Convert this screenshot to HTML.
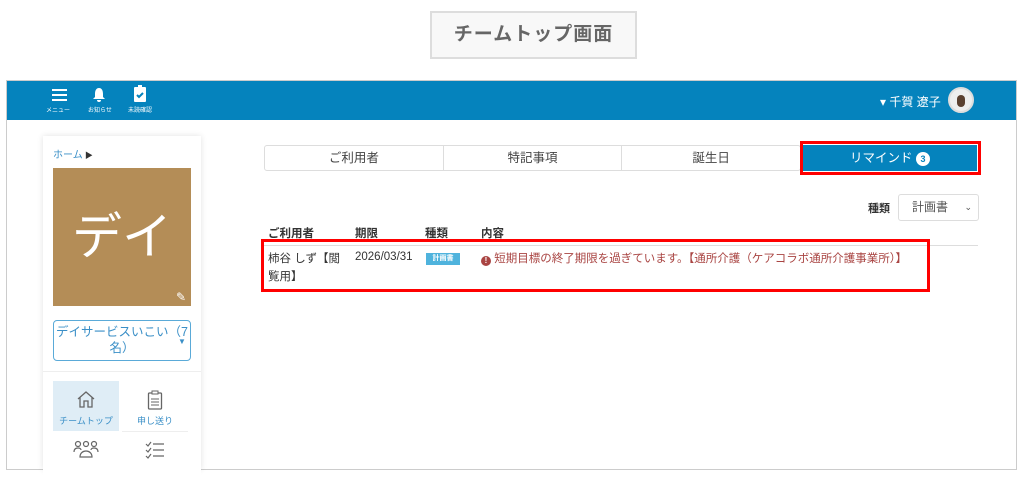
<!DOCTYPE html>
<html><head><meta charset="utf-8"><style>
*{box-sizing:border-box;margin:0;padding:0}
body{width:1024px;height:480px;background:#fff;font-family:"Liberation Sans","Noto Sans CJK JP",sans-serif;position:relative;overflow:hidden;color:#333}
.a{position:absolute}
</style></head><body>
<div class="a" style="left:430px;top:11px;width:207px;height:48px;border:2px solid #ddd;background:#f8f8f8;font-size:19px;font-weight:bold;color:#666;text-align:center;line-height:44px;letter-spacing:1px">チームトップ画面</div>
<div class="a" style="left:6px;top:80px;width:1011px;height:390px;border:1px solid #ccc;background:#fff"></div>
<div class="a" style="left:7px;top:81px;width:1009px;height:39px;background:#0583bd"></div>
<div class="a" style="left:52px;top:89px;width:15px;height:2px;background:#fff;box-shadow:0 5px 0 #fff,0 10px 0 #fff"></div>
<div class="a" style="left:46px;top:105px;font-size:6px;color:#fff">メニュー</div>
<svg class="a" style="left:92px;top:87px" width="14" height="16" viewBox="0 0 14 16"><path d="M7 1C4 1 3 4 3 7v3L1 12h12l-2-2V7c0-3-1-6-4-6z M5 13a2 2 0 0 0 4 0z" fill="#fff"/></svg>
<div class="a" style="left:88px;top:105px;font-size:6px;color:#fff">お知らせ</div>
<svg class="a" style="left:133px;top:85px" width="14" height="18" viewBox="0 0 14 18"><rect x="1" y="2" width="12" height="15" rx="1" fill="#fff"/><rect x="5" y="0" width="4" height="4" fill="#fff"/><path d="M4 10l2 2 4-4" stroke="#0583bd" stroke-width="2" fill="none"/></svg>
<div class="a" style="left:128px;top:105px;font-size:6px;color:#fff">未読確認</div>
<div class="a" style="left:880px;top:93px;font-size:12px;color:#fff">▾ 千賀 遼子</div>
<div class="a" style="left:948px;top:87px;width:26px;height:26px;border-radius:50%;background:#eee;border:2px solid #ddd"><div style="margin:6px auto;width:8px;height:12px;border-radius:4px;background:#5a4030"></div></div>
<div class="a" style="left:43px;top:136px;width:158px;height:334px;background:#fff;box-shadow:0 0 6px rgba(0,0,0,.12)"></div>
<div class="a" style="left:53px;top:146px;font-size:10px;color:#3a8fc7">ホーム<span style="color:#333;font-size:8px"> ▶</span></div>
<div class="a" style="left:53px;top:168px;width:138px;height:138px;background:#b48d57;color:#fff;font-size:50px;line-height:138px;text-align:center">デイ</div>
<div class="a" style="left:176px;top:290px;font-size:12px;color:#fff">✎</div>
<div class="a" style="left:53px;top:320px;width:138px;height:41px;border:1px solid #5aaad8;border-radius:4px"></div>
<div class="a" style="left:53px;top:324px;width:138px;color:#3a8fc7;font-size:12.5px;text-align:center;line-height:16px;white-space:nowrap">デイサービスいこい（7<br>名）</div>
<div class="a" style="left:178px;top:337px;font-size:8px;color:#3a8fc7">▼</div>
<div class="a" style="left:43px;top:371px;width:158px;height:1px;background:#eee"></div>
<div class="a" style="left:53px;top:381px;width:66px;height:50px;background:#dfedf6"></div>
<svg class="a" style="left:76px;top:390px" width="20" height="18" viewBox="0 0 20 18"><path d="M2 9L10 2l8 7M4 7v10h4v-6h4v6h4V7" stroke="#666" stroke-width="1.3" fill="none"/></svg>
<div class="a" style="left:53px;top:414px;width:66px;text-align:center;font-size:9px;color:#3a8fc7">チームトップ</div>
<svg class="a" style="left:147px;top:390px" width="16" height="20" viewBox="0 0 16 20"><rect x="1.5" y="3" width="13" height="16" rx="1" stroke="#666" stroke-width="1.3" fill="none"/><rect x="5" y="1" width="6" height="3" fill="#fff" stroke="#666"/><path d="M4 9h8M4 12h8M4 15h8" stroke="#666"/></svg>
<div class="a" style="left:122px;top:414px;width:66px;text-align:center;font-size:9px;color:#3a8fc7">申し送り</div>
<div class="a" style="left:122px;top:431px;width:66px;height:1px;background:#eee"></div>
<svg class="a" style="left:73px;top:440px" width="26" height="20" viewBox="0 0 26 20"><g stroke="#666" stroke-width="1.2" fill="none"><circle cx="5" cy="4" r="2.5"/><circle cx="13" cy="4" r="2.5"/><circle cx="21" cy="4" r="2.5"/><path d="M1 12c0-3 2-4 4-4s3 1 3 2M25 12c0-3-2-4-4-4s-3 1-3 2M7 17c0-4 3-6 6-6s6 2 6 6z"/></g></svg>
<svg class="a" style="left:145px;top:441px" width="20" height="18" viewBox="0 0 20 18"><path d="M1 3l2 2 3-4M1 9l2 2 3-4M1 15l2 2 3-4M8 3h11M8 9h11M8 15h11" stroke="#666" stroke-width="1.2" fill="none"/></svg>
<div class="a" style="left:43px;top:469px;width:158px;height:11px;background:#fff"></div>
<div class="a" style="left:264px;top:145px;width:537px;height:26px;border:1px solid #ddd;border-radius:3px;display:flex;font-size:12.5px;color:#444">
<div style="flex:1;text-align:center;line-height:24px;border-right:1px solid #ddd">ご利用者</div>
<div style="flex:1;text-align:center;line-height:24px;border-right:1px solid #ddd">特記事項</div>
<div style="flex:1;text-align:center;line-height:24px">誕生日</div></div>
<div class="a" style="left:800px;top:141px;width:181px;height:34px;border:3px solid #f00"></div>
<div class="a" style="left:803px;top:145px;width:174px;height:26px;background:#0583bd;color:#fff;font-size:12.5px;text-align:center;line-height:26px">リマインド <span style="display:inline-block;width:14px;height:14px;border-radius:50%;background:#fff;color:#0583bd;font-size:9px;line-height:14px;font-weight:bold">3</span></div>
<div class="a" style="left:868px;top:200px;font-size:11px;font-weight:bold">種類</div>
<div class="a" style="left:898px;top:194px;width:81px;height:27px;border:1px solid #ddd;border-radius:3px;font-size:12px;color:#555;line-height:25px;padding-left:13px">計画書<span style="position:absolute;right:6px;font-size:9px">⌄</span></div>
<div class="a" style="left:268px;top:225px;font-size:11.5px;font-weight:bold">ご利用者</div>
<div class="a" style="left:355px;top:225px;font-size:11.5px;font-weight:bold">期限</div>
<div class="a" style="left:425px;top:225px;font-size:11.5px;font-weight:bold">種類</div>
<div class="a" style="left:481px;top:225px;font-size:11.5px;font-weight:bold">内容</div>
<div class="a" style="left:264px;top:245px;width:714px;height:1px;background:#ddd"></div>
<div class="a" style="left:261px;top:239px;width:669px;height:53px;border:3px solid #f00"></div>
<div class="a" style="left:268px;top:250px;font-size:11.5px;line-height:18px;width:74px">柿谷 しず【閲覧用】</div>
<div class="a" style="left:355px;top:251px;font-size:11.5px">2026/03/31</div>
<div class="a" style="left:426px;top:253px;width:34px;height:12px;background:#4fb3dd;color:#fff;font-size:7px;text-align:center;line-height:12px;font-weight:bold">計画書</div>
<div class="a" style="left:481px;top:250px;font-size:11.5px;color:#a94442"><span style="display:inline-block;width:10px;height:10px;border-radius:50%;background:#a94442;color:#fff;font-size:8px;text-align:center;line-height:10px;font-weight:bold;vertical-align:-1px">!</span> 短期目標の終了期限を過ぎています。【通所介護（ケアコラボ通所介護事業所）】</div>
</body></html>
